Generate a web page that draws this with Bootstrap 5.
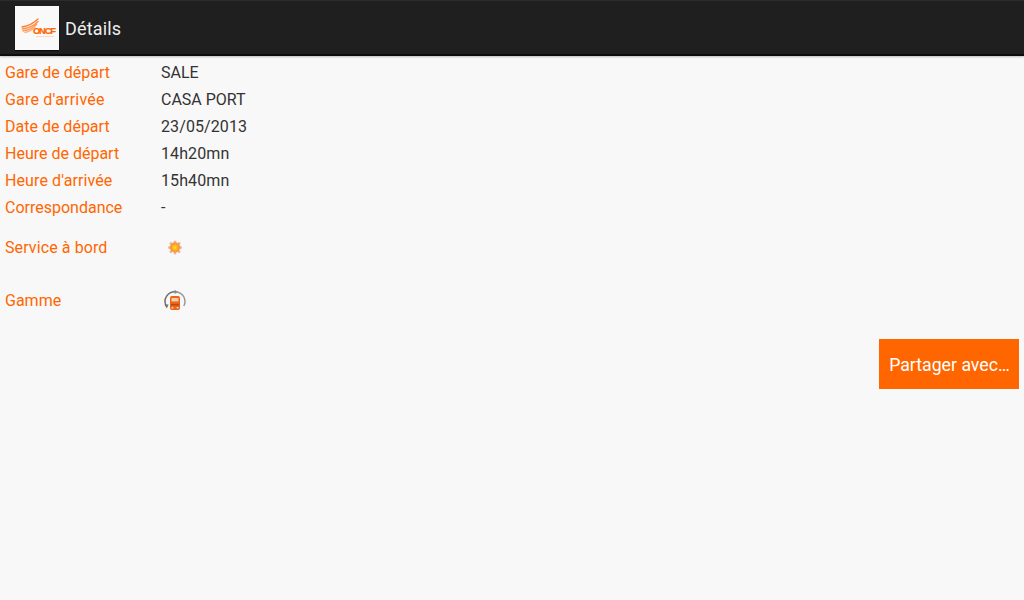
<!DOCTYPE html>
<html lang="fr">
  <head>
    <meta charset="UTF-8" />
    <meta name="viewport" content="width=device-width, initial-scale=1.0" />
    <title>Détails</title>
    <link
      href="https://cdn.jsdelivr.net/npm/bootstrap@5.3.0/dist/css/bootstrap.min.css"
      rel="stylesheet"
    />
    <style>
      html,
      body {
        height: 100%;
      }
      body {
        background-color: #f8f8f8;
        font-family: Roboto, "Liberation Sans", sans-serif;
        font-size: 16px;
        overflow: hidden;
      }
      .top-bar {
        height: 56px;
        background-color: #1f1f1f;
        border-top: 1px solid #2c2c2c;
        border-bottom: 2px solid #0c0c0c;
        padding-left: 15px;
        gap: 6px;
        box-shadow: 0 1px 2px rgba(0, 0, 0, 0.25);
      }
      .app-logo {
        width: 44px;
        height: 44px;
        background-color: #f9f9f9;
        box-shadow: 0 1px 1px rgba(0, 0, 0, 0.6);
      }
      .top-title {
        color: #eee;
        font-size: 18px;
        line-height: 1;
        letter-spacing: 0.15px;
        padding-top: 2px;
      }
      .details {
        padding-left: 5px;
        padding-top: 3px;
      }
      .detail-row {
        height: 27px;
      }
      .detail-row.row-service {
        height: 53px;
      }
      .detail-label {
        width: 156px;
        color: #ff6600;
      }
      .label-wide {
        letter-spacing: 0.1px;
      }
      .label-wider {
        letter-spacing: 0.2px;
      }
      .detail-value {
        color: #333;
      }
      .value-num {
        letter-spacing: 0.1px;
      }
      .icon-cell {
        width: 28px;
      }
      .share-row {
        padding-top: 12px;
      }
      .share-btn {
        width: 140px;
        height: 50px;
        margin-right: 5px;
        background-color: #ff6600;
        color: #fff;
        font-size: 17.7px;
        border: 0;
        border-radius: 0;
        padding: 2px 0 0 1px;
      }
      .share-btn:hover {
        background-color: #ff6600;
        color: #fff;
      }
    </style>
  </head>
  <body>
    <div class="top-bar d-flex align-items-center">
      <div class="app-logo">
        <svg class="d-block" width="44" height="44" viewBox="0 0 44 44">
          <g fill="none" stroke-linecap="round">
            <path d="M7 21 C13 20 19 17 23 13" stroke="#ff7a26" stroke-width="1.3" />
            <path d="M7.5 23 C14 22 20 19 23 15.5" stroke="#ff8a40" stroke-width="1.3" />
            <path d="M8 25 C14 24 19 21.5 21.5 18.5" stroke="#ff9a5a" stroke-width="1.3" />
            <path d="M10 26.5 C15 25.5 18 23.5 20 21" stroke="#ffb183" stroke-width="1.3" />
          </g>
          <text x="18" y="28" font-family="Liberation Sans, sans-serif" font-size="9.4" font-weight="700" fill="#ff6600" stroke="#ff6600" stroke-width="0.2" textLength="23">ONCF</text>
          <rect x="21" y="30" width="18" height="1" fill="#ffd9bf" />
        </svg>
      </div>
      <span class="top-title">Détails</span>
    </div>

    <div class="details">
      <div class="detail-row d-flex align-items-center">
        <span class="detail-label">Gare de départ</span>
        <span class="detail-value">SALE</span>
      </div>
      <div class="detail-row d-flex align-items-center">
        <span class="detail-label label-wider">Gare d'arrivée</span>
        <span class="detail-value">CASA PORT</span>
      </div>
      <div class="detail-row d-flex align-items-center">
        <span class="detail-label">Date de départ</span>
        <span class="detail-value value-num">23/05/2013</span>
      </div>
      <div class="detail-row d-flex align-items-center">
        <span class="detail-label">Heure de départ</span>
        <span class="detail-value value-num">14h20mn</span>
      </div>
      <div class="detail-row d-flex align-items-center">
        <span class="detail-label label-wide">Heure d'arrivée</span>
        <span class="detail-value value-num">15h40mn</span>
      </div>
      <div class="detail-row d-flex align-items-center">
        <span class="detail-label">Correspondance</span>
        <span class="detail-value">-</span>
      </div>
      <div class="detail-row row-service d-flex align-items-center">
        <span class="detail-label label-wide">Service à bord</span>
        <div class="icon-cell d-flex justify-content-center">
          <svg class="d-block" width="16" height="16" viewBox="0 0 16 16">
            <defs>
              <radialGradient id="sunCore">
                <stop offset="0" stop-color="#ffe11a" />
                <stop offset="0.45" stop-color="#ffb81f" />
                <stop offset="1" stop-color="#f08a3c" />
              </radialGradient>
            </defs>
            <g fill="#eeb39a">
              <circle cx="8" cy="2" r="1.5" />
              <circle cx="8" cy="13" r="1.5" />
              <circle cx="2.5" cy="7.5" r="1.5" />
              <circle cx="13.5" cy="7.5" r="1.5" />
              <circle cx="4" cy="3.5" r="1.5" />
              <circle cx="12" cy="3.5" r="1.5" />
              <circle cx="4" cy="11.5" r="1.5" />
              <circle cx="12" cy="11.5" r="1.5" />
            </g>
            <circle cx="8" cy="7.5" r="5" fill="url(#sunCore)" />
          </svg>
        </div>
      </div>
      <div class="detail-row row-service d-flex align-items-center">
        <span class="detail-label">Gamme</span>
        <div class="icon-cell d-flex justify-content-center">
          <svg class="d-block" width="24" height="24" viewBox="0 0 24 24">
            <path d="M3 16.5 A9.6 9.6 0 0 1 12 2.8" fill="none" stroke="#6f6f6f" stroke-width="1.5" />
            <path d="M13.5 2.9 A9.6 9.6 0 0 1 20.8 17" fill="none" stroke="#9a9a9a" stroke-width="1.5" />
            <path d="M1.4 15.4 L3.8 19.4 L5.6 15.6 Z" fill="#6f6f6f" />
            <path d="M11.6 0.8 L15 2.9 L11.6 5 Z" fill="#8a8a8a" />
            <rect x="7" y="7" width="10" height="14" rx="2" fill="#e8641b" />
            <rect x="8.5" y="9" width="7" height="3.5" fill="#f8c9a8" />
            <rect x="8" y="15" width="8" height="1.4" fill="#b44a10" />
            <rect x="8.5" y="18" width="1.8" height="1.4" fill="#ffd9bf" />
            <rect x="13.7" y="18" width="1.8" height="1.4" fill="#ffd9bf" />
          </svg>
        </div>
      </div>
    </div>

    <div class="d-flex justify-content-end share-row">
      <button type="button" class="btn share-btn">Partager avec…</button>
    </div>
  </body>
</html>
